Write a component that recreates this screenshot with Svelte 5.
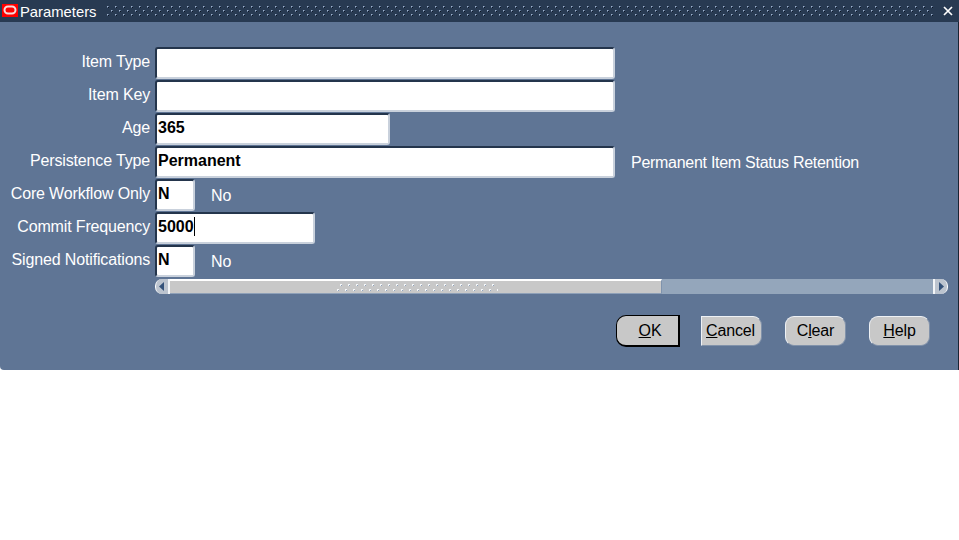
<script>
  const rows = [
    { label: 'Item Type', value: '', size: 'xl' },
    { label: 'Item Key', value: '', size: 'xl' },
    { label: 'Age', value: '365', size: 'md' },
    { label: 'Persistence Type', value: 'Permanent', size: 'xl', note: 'Permanent Item Status Retention' },
    { label: 'Core Workflow Only', value: 'N', size: 'xs', desc: 'No' },
    { label: 'Commit Frequency', value: '5000', size: 'sm', caret: true },
    { label: 'Signed Notifications', value: 'N', size: 'xs', desc: 'No' }
  ];
</script>

<div class="window">
  <header class="titlebar">
    <svg class="logo" width="16" height="13" viewBox="0 0 16 13" aria-hidden="true">
      <rect width="16" height="13" fill="#ff0000" />
      <rect x="2.5" y="2.5" width="11" height="7" rx="3.5" fill="none" stroke="#f6dcdc" stroke-width="2" />
    </svg>
    <span class="title">Parameters</span>
    <svg class="dots" height="22" aria-hidden="true">
      <defs>
        <pattern id="grip" width="8" height="8" patternUnits="userSpaceOnUse">
          <rect x="2" y="6" width="1" height="1" fill="#a3b4cb" />
          <rect x="3" y="6" width="1" height="1" fill="#5f7595" />
          <rect x="2" y="7" width="1" height="1" fill="#5f7595" />
          <rect x="3" y="7" width="1" height="1" fill="#0c1522" />
          <rect x="6" y="2" width="1" height="1" fill="#a3b4cb" />
          <rect x="7" y="2" width="1" height="1" fill="#5f7595" />
          <rect x="6" y="3" width="1" height="1" fill="#5f7595" />
          <rect x="7" y="3" width="1" height="1" fill="#0c1522" />
        </pattern>
      </defs>
      <rect width="100%" height="12" y="5" fill="url(#grip)" />
    </svg>
    <svg class="close" width="12" height="12" viewBox="0 0 12 12" aria-hidden="true">
      <path d="M2 2 10 10M10 2 2 10" stroke="#fff" stroke-width="1.7" />
    </svg>
  </header>

  <main class="panel">
    <div class="form">
      {#each rows as row}
        <div class="label">{row.label}</div>
        <div class="line">
          <div class="field {row.size}">{row.value}{#if row.caret}<i class="caret"></i>{/if}</div>
          {#if row.note}<span class="note">{row.note}</span>{/if}
          {#if row.desc}<span class="desc">{row.desc}</span>{/if}
        </div>
      {/each}
    </div>

    <div class="scrollbar">
      <div class="cap left"><svg width="6" height="9" viewBox="0 0 6 9"><path d="M5 0V9L0 4.5Z" fill="#34527a" /></svg></div>
      <div class="thumb">
        <svg class="thumbdots" width="164" height="8" aria-hidden="true">
          <defs>
            <pattern id="tgrip" width="8" height="10" patternUnits="userSpaceOnUse">
              <rect x="6" y="0" width="2" height="2" fill="#f4f6f8" />
              <rect x="7" y="1" width="1" height="1" fill="#8ea2bb" />
              <rect x="3" y="5" width="2" height="2" fill="#f4f6f8" />
              <rect x="4" y="6" width="1" height="1" fill="#8ea2bb" />
            </pattern>
          </defs>
          <rect width="164" height="8" fill="url(#tgrip)" />
        </svg>
      </div>
      <div class="track"></div>
      <div class="cap right"><svg width="6" height="9" viewBox="0 0 6 9"><path d="M1 0V9L6 4.5Z" fill="#34527a" /></svg></div>
    </div>

    <div class="actions">
      <button class="btn ok"><u>O</u>K</button>
      <button class="btn cancel"><u>C</u>ancel</button>
      <button class="btn">C<u>l</u>ear</button>
      <button class="btn"><u>H</u>elp</button>
    </div>
  </main>
</div>

<style>
  :global(body) {
    margin: 0;
    background: #fff;
  }

  .window {
    width: 959px;
    height: 370px;
    display: flex;
    flex-direction: column;
    font-family: "Liberation Sans", Arial, sans-serif;
    font-size: 16px;
    letter-spacing: -0.15px;
    color: #fff;
    box-sizing: border-box;
  }

  .titlebar {
    height: 22px;
    flex: none;
    background: #283a52;
    display: flex;
    align-items: center;
    box-sizing: border-box;
    padding: 0 5px 0 2px;
  }

  .logo {
    flex: none;
    margin-top: -1px;
  }

  .title {
    margin-left: 2px;
    width: 85px;
    flex: none;
    font-size: 14.8px;
    letter-spacing: 0;
    position: relative;
    top: 1px;
  }

  .dots {
    flex: 1;
    min-width: 0;
    margin-right: 8px;
  }

  .close {
    flex: none;
  }

  .panel {
    flex: 1;
    background: #5f7595;
    border-right: 1px solid #1a2433;
    border-bottom-left-radius: 4px;
    display: flex;
    flex-direction: column;
    padding-top: 25px;
    box-sizing: border-box;
  }

  .form {
    display: grid;
    grid-template-columns: 150px 1fr;
    column-gap: 5px;
    grid-auto-rows: 33px;
  }

  .label {
    text-align: right;
    line-height: 29px;
    white-space: nowrap;
  }

  .line {
    display: flex;
    align-items: flex-start;
  }

  .field {
    height: 32px;
    box-sizing: border-box;
    background: #fff;
    color: #000;
    font-weight: 700;
    letter-spacing: 0;
    line-height: 25px;
    padding-left: 1px;
    border: 2px solid;
    border-color: #24354c #c9d1dc #c9d1dc #24354c;
    border-radius: 3px;
    white-space: nowrap;
  }

  .xl { width: 460px; }
  .md { width: 235px; }
  .sm { width: 160px; }
  .xs { width: 40px; }

  .caret {
    display: inline-block;
    width: 1px;
    height: 19px;
    background: #000;
    vertical-align: -4px;
  }

  .note {
    margin-left: 16px;
    line-height: 33px;
    letter-spacing: -0.28px;
    white-space: nowrap;
  }

  .desc {
    margin-left: 16px;
    line-height: 33px;
  }

  .scrollbar {
    margin: 1px 0 0 155px;
    width: 793px;
    height: 15px;
    display: flex;
    box-sizing: border-box;
  }

  .cap {
    width: 15px;
    flex: none;
    background: #bcc4cf;
    display: flex;
    align-items: center;
    justify-content: center;
    box-sizing: border-box;
  }

  .cap.left {
    border-radius: 7px 0 0 7px;
    border-right: 2px solid #f4f6f8;
    border-left: 1px solid #fff;
  }

  .cap.right {
    border-radius: 0 7px 7px 0;
    border-left: 2px solid #f4f6f8;
    border-right: 1px solid #fff;
  }

  .thumb {
    width: 492px;
    flex: none;
    background: #c8c8c8;
    border-top: 2px solid #fff;
    border-bottom: 1px solid #8ea0b8;
    border-right: 1px solid #7f93ad;
    box-sizing: border-box;
    display: flex;
    align-items: flex-start;
    justify-content: center;
    padding-top: 3px;
  }

  .track {
    flex: 1;
    background: #94a6bb;
  }

  .actions {
    display: flex;
    align-items: center;
    margin: 21px 0 0 616px;
    height: 32px;
  }

  .btn {
    width: 61px;
    height: 30px;
    box-sizing: border-box;
    background: #c8c8c8;
    color: #000;
    font: inherit;
    letter-spacing: -0.15px;
    padding: 0;
    border: 1px solid;
    border-color: #eef1f5 #8192aa #8192aa #eef1f5;
    border-radius: 9px;
    margin-left: 23px;
  }

  .ok {
    width: 64px;
    height: 32px;
    margin-left: 0;
    border: 1px solid #000;
    border-width: 1px 2px 2px 1px;
    border-radius: 10px 0 0 10px;
    padding-left: 5px;
  }

  .cancel {
    margin-left: 21px;
    border-radius: 0 9px 9px 0;
    padding-right: 2px;
  }
</style>
